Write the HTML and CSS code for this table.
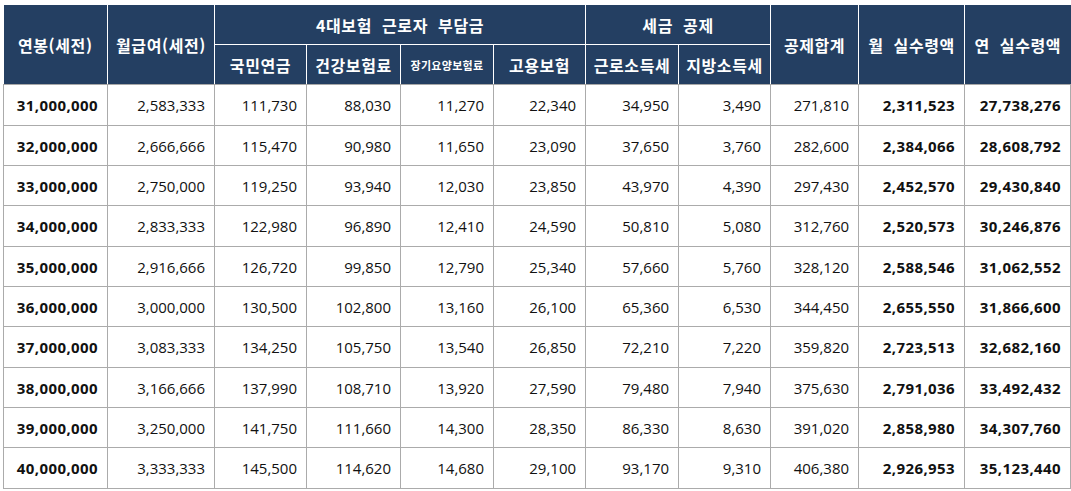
FILE: index.html
```html
<!DOCTYPE html>
<html lang="ko">
<head>
<meta charset="utf-8">
<title>연봉 실수령액 표</title>
<link rel="stylesheet" href="styles.css">
</head>
<body>
<table class="salary">
  <colgroup>
    <col class="c104"><col class="c107"><col class="c92"><col class="c94"><col class="c93"><col class="c92"><col class="c93"><col class="c92"><col class="c88"><col class="c106"><col class="c106">
  </colgroup>
  <thead>
    <tr class="h1">
      <th rowspan="2">연봉(세전)</th>
      <th rowspan="2">월급여(세전)</th>
      <th colspan="4">4대보험 근로자 부담금</th>
      <th colspan="2">세금 공제</th>
      <th rowspan="2">공제합계</th>
      <th rowspan="2">월 실수령액</th>
      <th rowspan="2">연 실수령액</th>
    </tr>
    <tr class="h2">
      <th>국민연금</th>
      <th>건강보험료</th>
      <th class="small">장기요양보험료</th>
      <th>고용보험</th>
      <th>근로소득세</th>
      <th>지방소득세</th>
    </tr>
  </thead>
  <tbody>
    <tr><td class="b">31,000,000</td><td>2,583,333</td><td>111,730</td><td>88,030</td><td>11,270</td><td>22,340</td><td>34,950</td><td>3,490</td><td>271,810</td><td class="b">2,311,523</td><td class="b">27,738,276</td></tr>
    <tr><td class="b">32,000,000</td><td>2,666,666</td><td>115,470</td><td>90,980</td><td>11,650</td><td>23,090</td><td>37,650</td><td>3,760</td><td>282,600</td><td class="b">2,384,066</td><td class="b">28,608,792</td></tr>
    <tr><td class="b">33,000,000</td><td>2,750,000</td><td>119,250</td><td>93,940</td><td>12,030</td><td>23,850</td><td>43,970</td><td>4,390</td><td>297,430</td><td class="b">2,452,570</td><td class="b">29,430,840</td></tr>
    <tr><td class="b">34,000,000</td><td>2,833,333</td><td>122,980</td><td>96,890</td><td>12,410</td><td>24,590</td><td>50,810</td><td>5,080</td><td>312,760</td><td class="b">2,520,573</td><td class="b">30,246,876</td></tr>
    <tr><td class="b">35,000,000</td><td>2,916,666</td><td>126,720</td><td>99,850</td><td>12,790</td><td>25,340</td><td>57,660</td><td>5,760</td><td>328,120</td><td class="b">2,588,546</td><td class="b">31,062,552</td></tr>
    <tr><td class="b">36,000,000</td><td>3,000,000</td><td>130,500</td><td>102,800</td><td>13,160</td><td>26,100</td><td>65,360</td><td>6,530</td><td>344,450</td><td class="b">2,655,550</td><td class="b">31,866,600</td></tr>
    <tr><td class="b">37,000,000</td><td>3,083,333</td><td>134,250</td><td>105,750</td><td>13,540</td><td>26,850</td><td>72,210</td><td>7,220</td><td>359,820</td><td class="b">2,723,513</td><td class="b">32,682,160</td></tr>
    <tr><td class="b">38,000,000</td><td>3,166,666</td><td>137,990</td><td>108,710</td><td>13,920</td><td>27,590</td><td>79,480</td><td>7,940</td><td>375,630</td><td class="b">2,791,036</td><td class="b">33,492,432</td></tr>
    <tr><td class="b">39,000,000</td><td>3,250,000</td><td>141,750</td><td>111,660</td><td>14,300</td><td>28,350</td><td>86,330</td><td>8,630</td><td>391,020</td><td class="b">2,858,980</td><td class="b">34,307,760</td></tr>
    <tr><td class="b">40,000,000</td><td>3,333,333</td><td>145,500</td><td>114,620</td><td>14,680</td><td>29,100</td><td>93,170</td><td>9,310</td><td>406,380</td><td class="b">2,926,953</td><td class="b">35,123,440</td></tr>
  </tbody>
</table>
</body>
</html>
```
FILE: styles.css
```css
html, body {
  margin: 0;
  padding: 0;
  background: #ffffff;
}
body {
  padding: 5px 0 0 3px;
  font-family: "Open Sans", "Noto Sans CJK KR", sans-serif;
  color: #111;
}
.salary {
  border-collapse: collapse;
  table-layout: fixed;
  width: 1068px;
  font-size: 15px;
}
.c104 { width: 104px; }
.c107 { width: 107px; }
.c92 { width: 92px; }
.c94 { width: 94px; }
.c93 { width: 93px; }
.c88 { width: 88px; }
.c106 { width: 106px; }

.salary th {
  background: #243f62;
  color: #ffffff;
  font-family: "Noto Sans CJK KR", sans-serif;
  font-weight: 700;
  font-size: 16px;
  letter-spacing: 0.6px;
  word-spacing: 5px;
  border: 1px solid #ffffff;
  border-top: 0;
  padding: 0;
  height: 39px;
  text-align: center;
  vertical-align: middle;
  white-space: nowrap;
}
.salary tr.h1 th:first-child { border-left: 0; }
.salary tr.h1 th:last-child { border-right: 0; }
.salary tr.h2 th { border-bottom: 1px solid #a8a8a8; }
.salary tr.h1 th[rowspan] { border-bottom: 1px solid #a8a8a8; }
.salary th.small { font-size: 11px; letter-spacing: 0.3px; }

.salary td {
  border: 1px solid #ababab;
  height: 39px;
  padding: 0 9px 0 0;
  text-align: right;
  vertical-align: middle;
  white-space: nowrap;
}
.salary tbody tr:nth-child(3n+1) td { height: 40px; }
.salary td.b { font-weight: 700; letter-spacing: 0.4px; }
```
